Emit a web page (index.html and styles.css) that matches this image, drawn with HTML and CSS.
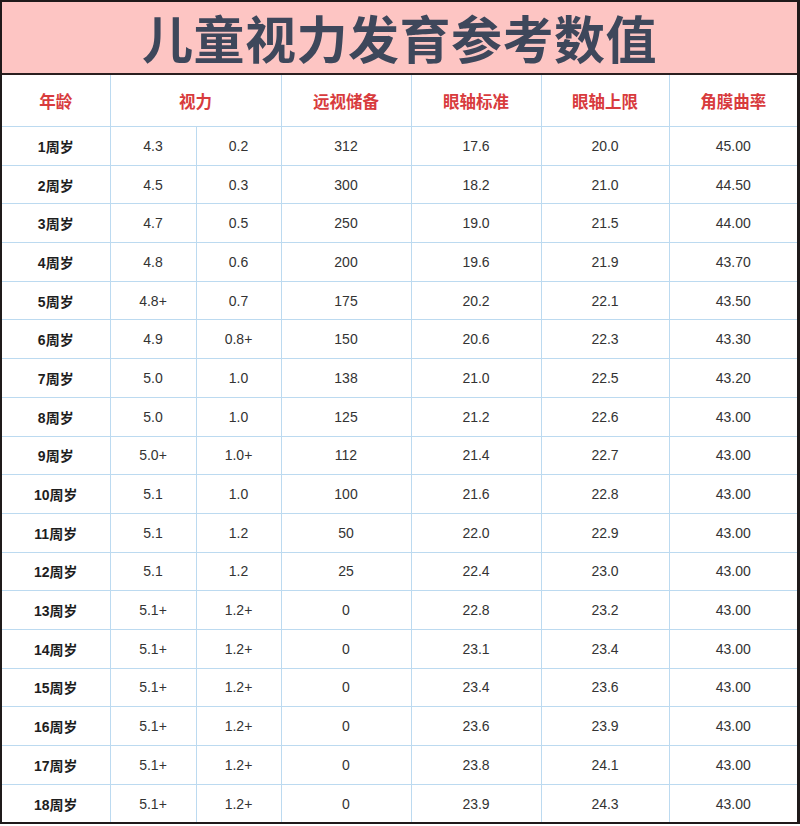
FILE: index.html
```html
<!DOCTYPE html>
<html lang="zh">
<head>
<meta charset="utf-8">
<link rel="stylesheet" href="styles.css">
</head>
<body>
<div class="frame">
  <div class="title">儿童视力发育参考数值</div>
  <table class="grid">
    <colgroup>
      <col class="c-age"><col class="c-v1"><col class="c-v2"><col class="c-w"><col class="c-w"><col class="c-n"><col class="c-n">
    </colgroup>
    <thead>
      <tr><th>年龄</th><th colspan="2">视力</th><th>远视储备</th><th>眼轴标准</th><th>眼轴上限</th><th>角膜曲率</th></tr>
    </thead>
    <tbody>
      <tr><td class="age">1周岁</td><td>4.3</td><td>0.2</td><td>312</td><td>17.6</td><td>20.0</td><td>45.00</td></tr>
      <tr><td class="age">2周岁</td><td>4.5</td><td>0.3</td><td>300</td><td>18.2</td><td>21.0</td><td>44.50</td></tr>
      <tr><td class="age">3周岁</td><td>4.7</td><td>0.5</td><td>250</td><td>19.0</td><td>21.5</td><td>44.00</td></tr>
      <tr><td class="age">4周岁</td><td>4.8</td><td>0.6</td><td>200</td><td>19.6</td><td>21.9</td><td>43.70</td></tr>
      <tr><td class="age">5周岁</td><td>4.8+</td><td>0.7</td><td>175</td><td>20.2</td><td>22.1</td><td>43.50</td></tr>
      <tr><td class="age">6周岁</td><td>4.9</td><td>0.8+</td><td>150</td><td>20.6</td><td>22.3</td><td>43.30</td></tr>
      <tr><td class="age">7周岁</td><td>5.0</td><td>1.0</td><td>138</td><td>21.0</td><td>22.5</td><td>43.20</td></tr>
      <tr><td class="age">8周岁</td><td>5.0</td><td>1.0</td><td>125</td><td>21.2</td><td>22.6</td><td>43.00</td></tr>
      <tr><td class="age">9周岁</td><td>5.0+</td><td>1.0+</td><td>112</td><td>21.4</td><td>22.7</td><td>43.00</td></tr>
      <tr><td class="age">10周岁</td><td>5.1</td><td>1.0</td><td>100</td><td>21.6</td><td>22.8</td><td>43.00</td></tr>
      <tr><td class="age">11周岁</td><td>5.1</td><td>1.2</td><td>50</td><td>22.0</td><td>22.9</td><td>43.00</td></tr>
      <tr><td class="age">12周岁</td><td>5.1</td><td>1.2</td><td>25</td><td>22.4</td><td>23.0</td><td>43.00</td></tr>
      <tr><td class="age">13周岁</td><td>5.1+</td><td>1.2+</td><td>0</td><td>22.8</td><td>23.2</td><td>43.00</td></tr>
      <tr><td class="age">14周岁</td><td>5.1+</td><td>1.2+</td><td>0</td><td>23.1</td><td>23.4</td><td>43.00</td></tr>
      <tr><td class="age">15周岁</td><td>5.1+</td><td>1.2+</td><td>0</td><td>23.4</td><td>23.6</td><td>43.00</td></tr>
      <tr><td class="age">16周岁</td><td>5.1+</td><td>1.2+</td><td>0</td><td>23.6</td><td>23.9</td><td>43.00</td></tr>
      <tr><td class="age">17周岁</td><td>5.1+</td><td>1.2+</td><td>0</td><td>23.8</td><td>24.1</td><td>43.00</td></tr>
      <tr><td class="age">18周岁</td><td>5.1+</td><td>1.2+</td><td>0</td><td>23.9</td><td>24.3</td><td>43.00</td></tr>
    </tbody>
  </table>
</div>
</body>
</html>
```
FILE: styles.css
```css
html, body {
  margin: 0;
  padding: 0;
  background: #ffffff;
}
.frame {
  width: 800px;
  box-sizing: border-box;
  border-top: 2px solid #1f1a1a;
  border-left: 2px solid #1f1a1a;
  border-right: 3px solid #1f1a1a;
  border-bottom: 2px solid #1f1a1a;
  display: flex;
  flex-direction: column;
}
.title {
  height: 73px;
  background: #fdc5c3;
  border-bottom: 2px solid #2a1f1f;
  display: flex;
  align-items: center;
  justify-content: center;
  font-family: "Noto Sans CJK SC", "Noto Sans", sans-serif;
  font-weight: 700;
  font-size: 51px;
  color: #3e475b;
  letter-spacing: 0.5px;
  padding-bottom: 1px;
  box-sizing: border-box;
}
.grid {
  width: 795px;
  border-collapse: collapse;
  table-layout: fixed;
  font-family: "Liberation Sans", Arial, "Noto Sans CJK SC", sans-serif;
}
.c-age { width: 108px; }
.c-v1 { width: 86px; }
.c-v2 { width: 85px; }
.c-w { width: 130px; }
.c-n { width: 128px; }
.grid th, .grid td {
  border: 1px solid #bcdaf0;
  text-align: center;
  padding: 0;
}
.grid tr > :first-child { border-left: none; }
.grid tr > :last-child { border-right: none; }
.grid thead tr > * { border-top: none; }
.grid tbody tr:last-child > * { border-bottom: none; }
.grid th {
  height: 51px;
  font-family: "Noto Sans CJK SC", sans-serif;
  font-weight: 700;
  font-size: 16.5px;
  color: #d83b3d;
}
.grid td {
  height: 37.7px;
  font-size: 14px;
  color: #333333;
}
.grid td.age {
  font-family: "Liberation Sans", "Noto Sans CJK SC", sans-serif;
  font-weight: 700;
  color: #1e1e1e;
}
```
